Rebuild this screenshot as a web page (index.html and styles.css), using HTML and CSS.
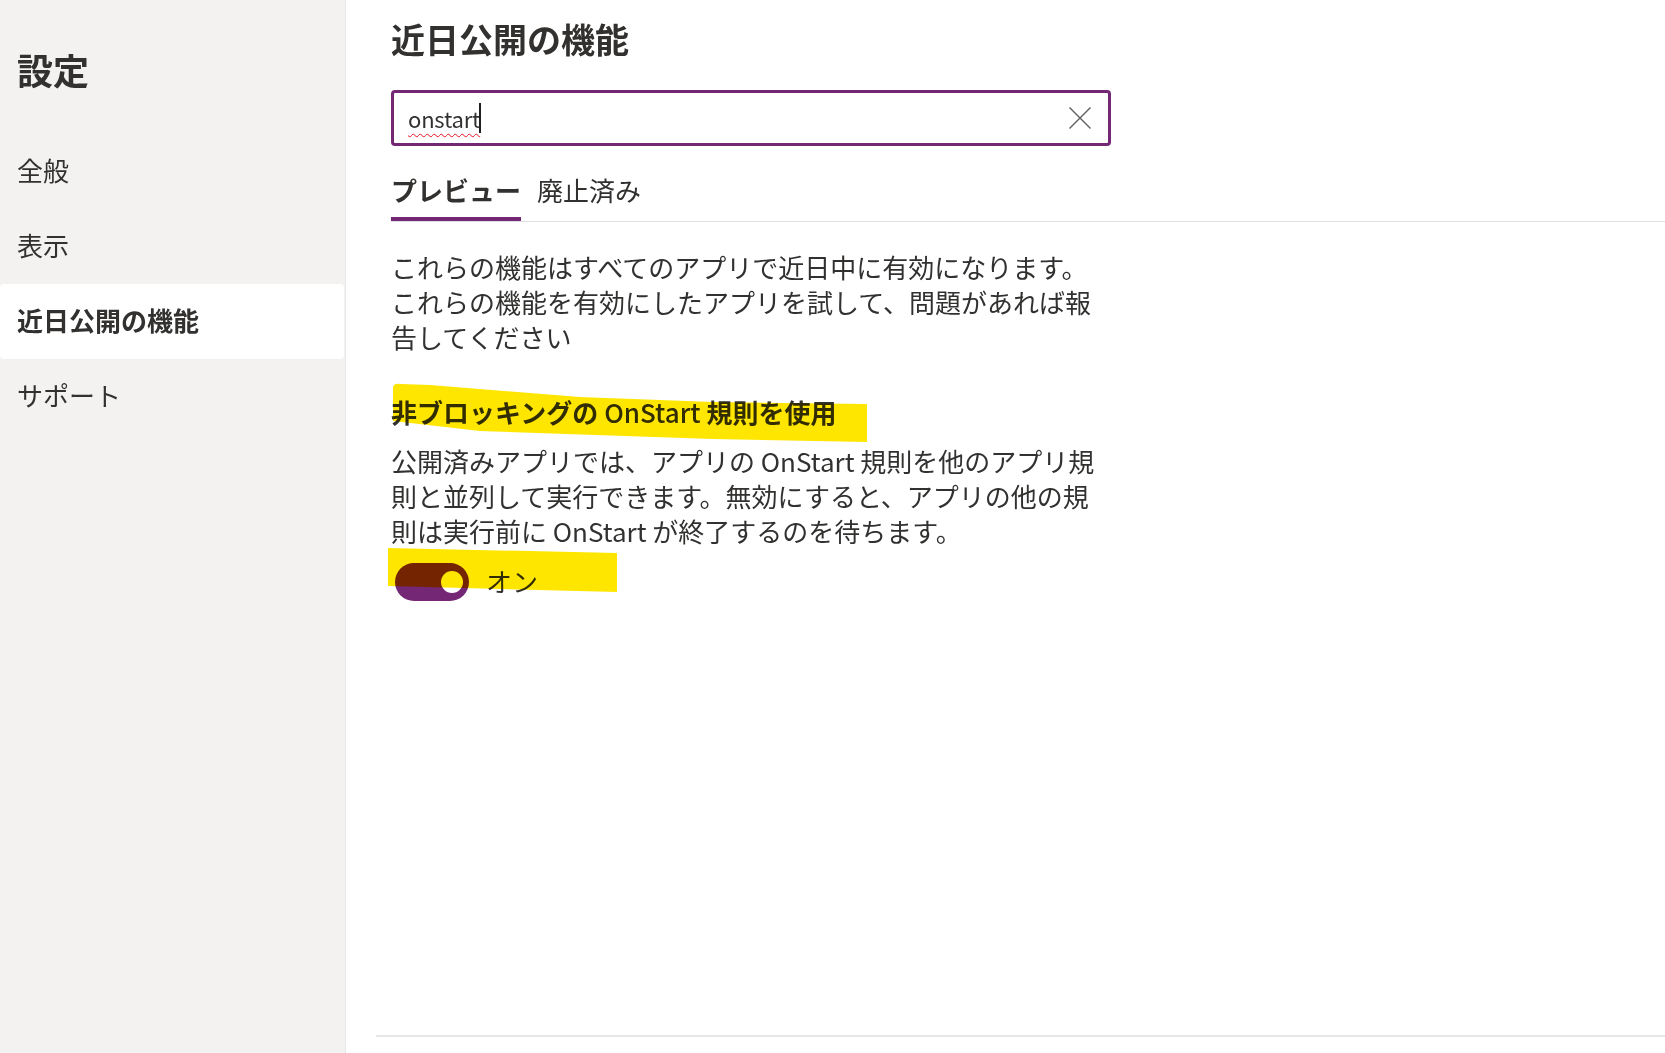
FILE: index.html
```html
<!DOCTYPE html>
<html lang="ja">
<head>
<meta charset="utf-8">
<title>設定</title>
<link rel="stylesheet" href="styles.css">
</head>
<body>
<div class="app">
  <aside class="sidebar">
    <h1 class="sidebar-title">設定</h1>
    <nav class="nav">
      <div class="nav-item">全般</div>
      <div class="nav-item">表示</div>
      <div class="nav-item is-active">近日公開の機能</div>
      <div class="nav-item">サポート</div>
    </nav>
  </aside>
  <main class="main">
    <div class="content">
      <h2 class="page-title">近日公開の機能</h2>
      <div class="search">
        <div class="search-value"><span class="misspelled">onstart</span><span class="caret"></span></div>
        <svg class="search-clear" width="24" height="24" viewBox="0 0 24 24"><path d="M1.5 1.5 L22.5 22.5 M22.5 1.5 L1.5 22.5" stroke="#605e5c" stroke-width="1.4" fill="none"/></svg>
      </div>
      <div class="tabs">
        <div class="tab is-active">プレビュー</div>
        <div class="tab">廃止済み</div>
      </div>
      <div class="panel">
        <p class="intro">これらの機能はすべてのアプリで近日中に有効になります。これらの機能を有効にしたアプリを試して、問題があれば報告してください</p>
        <section class="feature">
          <h3 class="feature-title">非ブロッキングの <span class="latin">OnStart</span> 規則を使用
            <svg class="marker marker-title" width="474" height="60" viewBox="0 0 474 60"><path d="M0 4 Q1 0 8 1 L37 2 L187 14 L320 19 L474 21 L474 59 L320 56 L87 48 L0 38 Z" fill="#ffe600"/></svg>
          </h3>
          <p class="feature-desc">公開済みアプリでは、アプリの OnStart 規則を他のアプリ規則と並列して実行できます。無効にすると、アプリの他の規則は実行前に OnStart が終了するのを待ちます。</p>
          <div class="toggle-row">
            <div class="toggle"><span class="toggle-knob"></span></div>
            <span class="toggle-label">オン</span>
            <svg class="marker marker-toggle" width="229" height="44" viewBox="0 0 229 44"><path d="M0 0 L229 5 L229 44 L0 38 Z" fill="#ffe600"/></svg>
          </div>
        </section>
      </div>
    </div>
    <div class="footer"></div>
  </main>
</div>
</body>
</html>
```
FILE: styles.css
```css
* { box-sizing: border-box; }
html, body { margin: 0; padding: 0; }
body {
  font-family: "Noto Sans CJK JP", "Noto Sans", sans-serif;
  color: #323130;
  background: #ffffff;
}
.app {
  display: flex;
  height: 1053px;
  overflow: hidden;
}
.sidebar {
  width: 346px;
  flex: none;
  background: #f3f2f1;
  border-right: 1px solid #eae8e6;
  padding-top: 45px;
}
.sidebar-title {
  margin: 0 0 41px 0;
  padding-left: 17px;
  font-size: 36px;
  line-height: 48px;
  font-weight: 700;
}
.nav { display: flex; flex-direction: column; }
.nav-item {
  height: 75px;
  display: flex;
  align-items: center;
  padding-left: 17px;
  padding-bottom: 4px;
  font-size: 26px;
  font-weight: 400;
  margin-right: 1px;
  border-radius: 4px;
}
.nav-item.is-active {
  background: #ffffff;
  font-weight: 700;
}
.main {
  flex: 1;
  display: flex;
  flex-direction: column;
  min-width: 0;
}
.content {
  flex: 1;
  padding-left: 45px;
}
.page-title {
  margin: 17px 0 0 0;
  font-size: 34px;
  line-height: 44px;
  font-weight: 700;
}
.search {
  margin-top: 29px;
  width: 720px;
  height: 56px;
  border: 3px solid #742774;
  border-radius: 4px;
  display: flex;
  align-items: center;
  padding: 0 16px 0 14px;
}
.search-value {
  flex: 1;
  display: flex;
  align-items: center;
  font-size: 22px;
  line-height: 30px;
  color: #323130;
}
.misspelled {
  text-decoration: underline wavy #e81123;
  text-decoration-thickness: 1px;
  text-underline-offset: 5px;
  letter-spacing: -0.2px;
}
.caret {
  display: inline-block;
  width: 2px;
  height: 30px;
  background: #201f1e;
  margin-left: -1px;
}
.search-clear { flex: none; }
.tabs {
  margin-top: 26px;
  display: flex;
  gap: 16px;
  border-bottom: 1px solid #e1dfdd;
}
.tab {
  position: relative;
  font-size: 26px;
  line-height: 35px;
  padding-bottom: 14px;
  font-weight: 400;
}
.tab.is-active { font-weight: 700; }
.tab.is-active::after {
  content: "";
  position: absolute;
  left: 0;
  right: 0;
  bottom: 0;
  height: 4px;
  background: #742774;
}
.panel { width: 720px; }
.intro {
  margin: 27px 0 0 0;
  font-size: 26px;
  line-height: 35px;
}
.feature { margin-top: 40px; }
.feature-title {
  position: relative;
  margin: 0;
  font-size: 26px;
  line-height: 35px;
  font-weight: 700;
}
.feature-title .latin { font-weight: 500; }
.feature-desc {
  margin: 14px 0 0 0;
  font-size: 26px;
  line-height: 35px;
}
.toggle-row {
  position: relative;
  margin-top: 15px;
  display: flex;
  align-items: center;
  gap: 17px;
  height: 38px;
}
.toggle {
  margin-left: 4px;
  width: 74px;
  height: 38px;
  border-radius: 19px;
  background: #742774;
  display: flex;
  align-items: center;
  justify-content: flex-end;
  padding-right: 6px;
}
.toggle-knob {
  width: 22px;
  height: 22px;
  border-radius: 50%;
  background: #ffffff;
}
.toggle-label {
  font-size: 26px;
  line-height: 35px;
  padding-bottom: 4px;
}
.marker {
  position: absolute;
  mix-blend-mode: multiply;
  pointer-events: none;
}
.marker-title { left: 2px; top: -11px; }
.marker-toggle { left: -3px; top: -15px; }
.footer {
  flex: none;
  height: 18px;
  margin-left: 30px;
  border-top: 2px solid #e8e6e4;
}
```
